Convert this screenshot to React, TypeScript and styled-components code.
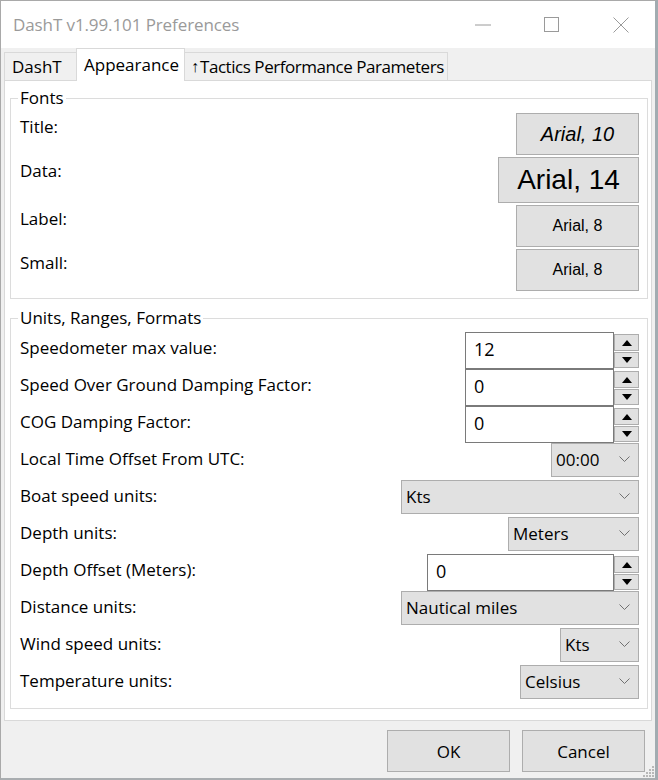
import React from 'react';
import styled, { createGlobalStyle } from 'styled-components';

const UI = `"Open Sans", "Noto Sans", "DejaVu Sans", sans-serif`;
const ARIAL = `"Liberation Sans", Arial, sans-serif`;

const GlobalStyle = createGlobalStyle`
  html, body { margin: 0; padding: 0; background: #ffffff; }
  * { box-sizing: border-box; }
`;

const Window = styled.div`
  width: 658px;
  height: 780px;
  display: flex;
  flex-direction: column;
  border-left: 1px solid #a9a9a9;
  border-top: 1px solid #a9a9a9;
  border-right: 3px solid #a2acb1;
  border-bottom: 2px solid #a9adb0;
  background: #f0f0f0;
  font-family: ${UI};
  font-size: 17px;
  color: #000;
  position: relative;
`;

const TitleBar = styled.div`
  height: 47px;
  flex-shrink: 0;
  display: flex;
  align-items: center;
  background: #ffffff;
`;

const TitleText = styled.div`
  flex: 1;
  padding-left: 12px;
  color: #9a9a9a;
  font-size: 17px;
  letter-spacing: -0.1px;
`;

const CaptionButtons = styled.div`
  display: flex;
  height: 100%;
`;

const CaptionButton = styled.div`
  width: 69px;
  height: 100%;
  display: flex;
  align-items: center;
  justify-content: center;
`;

const Client = styled.div`
  flex: 1;
  display: flex;
  flex-direction: column;
  padding: 0 3px;
`;

const TabStrip = styled.div`
  height: 32px;
  flex-shrink: 0;
  display: flex;
  align-items: flex-end;
`;

const Tab = styled.div<{ $active?: boolean; $w: number }>`
  width: ${p => p.$w}px;
  height: ${p => (p.$active ? 33 : 28)}px;
  margin: 0 ${p => (p.$active ? -2 : 0)}px ${p => (p.$active ? -1 : 0)}px;
  padding: 0 0 ${p => (p.$active ? 2 : 0)}px 7px;
  background: ${p => (p.$active ? '#ffffff' : '#f0f0f0')};
  border: 1px solid #d9d9d9;
  border-bottom: none;
  display: flex;
  align-items: center;
  white-space: nowrap;
  overflow: hidden;
  font-size: 17px;
  position: relative;
  z-index: ${p => (p.$active ? 2 : 1)};
`;

const TabArrow = styled.span`
  font-family: "Liberation Sans", sans-serif;
  font-size: 16px;
  margin-right: 1px;
`;

const TightText = styled.span`
  letter-spacing: -0.45px;
`;

const Panel = styled.div`
  height: 641px;
  flex-shrink: 0;
  background: #ffffff;
  border: 1px solid #d9d9d9;
  padding: 5px 3px 0 5px;
  display: flex;
  flex-direction: column;
  gap: 7px;
`;

const Group = styled.fieldset<{ $top: number; $bottom: number }>`
  margin: 0;
  min-width: 0;
  border: 1px solid #dcdcdc;
  padding: ${p => p.$top}px 8px ${p => p.$bottom}px 9px;
  display: flex;
  flex-direction: column;
`;

const Legend = styled.legend`
  padding: 0 2px;
  margin-left: -2px;
  line-height: 24px;
  font-size: 17px;
`;

const FontList = styled.div`
  display: flex;
  flex-direction: column;
  gap: 2px;
`;

const FontRow = styled.div`
  display: flex;
  justify-content: space-between;
  align-items: flex-start;
`;

const FieldLabel = styled.span<{ $pt: number }>`
  line-height: 24px;
  padding-top: ${p => p.$pt}px;
  white-space: nowrap;
`;

const FontButton = styled.div<{ $w: number; $h: number; $size: number; $italic?: boolean }>`
  width: ${p => p.$w}px;
  height: ${p => p.$h}px;
  background: #e1e1e1;
  border: 1px solid #adadad;
  display: flex;
  align-items: center;
  justify-content: center;
  font-family: ${ARIAL};
  font-size: ${p => p.$size}px;
  font-style: ${p => (p.$italic ? 'italic' : 'normal')};
`;

const UnitRow = styled.div`
  height: 37px;
  display: flex;
  justify-content: space-between;
  align-items: flex-start;
`;

const Spin = styled.div`
  display: flex;
`;

const SpinInput = styled.div<{ $w: number }>`
  width: ${p => p.$w}px;
  height: 37px;
  background: #ffffff;
  border: 1px solid #7a7a7a;
  padding: 0 0 4px 8px;
  display: flex;
  align-items: center;
  font-size: 18px;
`;

const SpinButtons = styled.div`
  width: 25px;
  padding-top: 2px;
  display: flex;
  flex-direction: column;
  gap: 1px;
`;

const SpinButton = styled.div<{ $h: number }>`
  height: ${p => p.$h}px;
  background: #e1e1e1;
  border: 1px solid #adadad;
  display: flex;
  align-items: center;
  justify-content: center;
`;

const Combo = styled.div<{ $w: number }>`
  width: ${p => p.$w}px;
  height: 34px;
  background: #e1e1e1;
  border: 1px solid #adadad;
  display: flex;
  align-items: center;
  justify-content: space-between;
  padding: 0 8px 2px 4px;
  font-size: 17px;
  white-space: nowrap;
`;

const Footer = styled.div`
  flex: 1;
  display: flex;
  justify-content: flex-end;
  align-items: flex-start;
  gap: 12px;
  padding: 9px 7px 0 0;
  position: relative;
`;

const DialogButton = styled.div`
  width: 123px;
  height: 42px;
  background: #e1e1e1;
  border: 1px solid #adadad;
  display: flex;
  align-items: center;
  justify-content: center;
  font-size: 17px;
`;

const Grip = styled.svg`
  position: absolute;
  right: -3px;
  bottom: 0;
`;

const Arrow = ({ up }: { up?: boolean }) => (
  <svg width="10" height="6" viewBox="0 0 10 6">
    {up ? <polygon points="0,6 10,6 5,0" fill="#000" /> : <polygon points="0,0 10,0 5,6" fill="#000" />}
  </svg>
);

const Chevron = () => (
  <svg width="11" height="7" viewBox="0 0 11 7">
    <polyline points="0.5,0.5 5.5,5.5 10.5,0.5" fill="none" stroke="#707070" strokeWidth="1" />
  </svg>
);

const SpinBox = ({ value, w }: { value: string; w: number }) => (
  <Spin>
    <SpinInput $w={w}>{value}</SpinInput>
    <SpinButtons>
      <SpinButton $h={17}><Arrow up /></SpinButton>
      <SpinButton $h={16}><Arrow /></SpinButton>
    </SpinButtons>
  </Spin>
);

const Select = ({ value, w }: { value: string; w: number }) => (
  <Combo $w={w}>
    <span>{value}</span>
    <Chevron />
  </Combo>
);

const fonts = [
  { label: 'Title:', text: 'Arial, 10', w: 123, h: 42, size: 20, italic: true },
  { label: 'Data:', text: 'Arial, 14', w: 141, h: 46, size: 28 },
  { label: 'Label:', text: 'Arial, 8', w: 123, h: 42, size: 16 },
  { label: 'Small:', text: 'Arial, 8', w: 123, h: 42, size: 16 },
];

type Unit = { label: string; kind: 'spin' | 'combo'; value: string; w: number };

const units: Unit[] = [
  { label: 'Speedometer max value:', kind: 'spin', value: '12', w: 149 },
  { label: 'Speed Over Ground Damping Factor:', kind: 'spin', value: '0', w: 149 },
  { label: 'COG Damping Factor:', kind: 'spin', value: '0', w: 149 },
  { label: 'Local Time Offset From UTC:', kind: 'combo', value: '00:00', w: 88 },
  { label: 'Boat speed units:', kind: 'combo', value: 'Kts', w: 238 },
  { label: 'Depth units:', kind: 'combo', value: 'Meters', w: 131 },
  { label: 'Depth Offset (Meters):', kind: 'spin', value: '0', w: 187 },
  { label: 'Distance units:', kind: 'combo', value: 'Nautical miles', w: 238 },
  { label: 'Wind speed units:', kind: 'combo', value: 'Kts', w: 79 },
  { label: 'Temperature units:', kind: 'combo', value: 'Celsius', w: 119 },
];

export default function App() {
  return (
    <>
      <GlobalStyle />
      <Window>
        <TitleBar>
          <TitleText>DashT v1.99.101 Preferences</TitleText>
          <CaptionButtons>
            <CaptionButton>
              <svg width="16" height="2" viewBox="0 0 16 2">
                <line x1="0" y1="1" x2="16" y2="1" stroke="#9a9a9a" strokeWidth="1" />
              </svg>
            </CaptionButton>
            <CaptionButton>
              <svg width="15" height="15" viewBox="0 0 15 15">
                <rect x="0.5" y="0.5" width="14" height="14" fill="none" stroke="#9a9a9a" strokeWidth="1" />
              </svg>
            </CaptionButton>
            <CaptionButton>
              <svg width="16" height="16" viewBox="0 0 16 16">
                <line x1="0.5" y1="0.5" x2="15.5" y2="15.5" stroke="#9a9a9a" strokeWidth="1" />
                <line x1="15.5" y1="0.5" x2="0.5" y2="15.5" stroke="#9a9a9a" strokeWidth="1" />
              </svg>
            </CaptionButton>
          </CaptionButtons>
        </TitleBar>
        <Client>
          <TabStrip>
            <Tab $w={74}>DashT</Tab>
            <Tab $w={109} $active>Appearance</Tab>
            <Tab $w={265}>
              <TabArrow>↑</TabArrow>
              <TightText>Tactics Performance Parameters</TightText>
            </Tab>
          </TabStrip>
          <Panel>
            <Group $top={3} $bottom={7}>
              <Legend>Fonts</Legend>
              <FontList>
                {fonts.map((f, i) => (
                  <FontRow key={i}>
                    <FieldLabel $pt={2}>{f.label}</FieldLabel>
                    <FontButton $w={f.w} $h={f.h} $size={f.size} $italic={f.italic}>
                      {f.text}
                    </FontButton>
                  </FontRow>
                ))}
              </FontList>
            </Group>
            <Group $top={2} $bottom={6}>
              <Legend>Units, Ranges, Formats</Legend>
              {units.map((u, i) => (
                <UnitRow key={i}>
                  <FieldLabel $pt={4}>{u.label}</FieldLabel>
                  {u.kind === 'spin' ? <SpinBox value={u.value} w={u.w} /> : <Select value={u.value} w={u.w} />}
                </UnitRow>
              ))}
            </Group>
          </Panel>
          <Footer>
            <DialogButton>OK</DialogButton>
            <DialogButton>Cancel</DialogButton>
            <Grip width="12" height="12" viewBox="0 0 12 12">
              {[
                [9, 0], [6, 3], [9, 3], [3, 6], [6, 6], [9, 6], [0, 9], [3, 9], [6, 9], [9, 9],
              ].map(([x, y], i) => (
                <rect key={i} x={x} y={y} width="2" height="2" fill="#b8b8b8" />
              ))}
            </Grip>
          </Footer>
        </Client>
      </Window>
    </>
  );
}
